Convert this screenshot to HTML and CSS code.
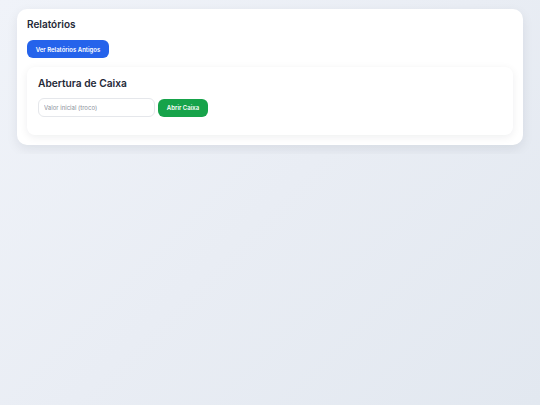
FILE: index.html
```html
<!DOCTYPE html>
<html lang="pt">
<head>
<meta charset="utf-8">
<link rel="stylesheet" href="styles.css">
</head>
<body>
<div class="page">
  <section class="card">
    <h1 class="title">Relatórios</h1>
    <button class="btn btn-blue">Ver Relatórios Antigos</button>
    <div class="inner">
      <h2 class="subtitle">Abertura de Caixa</h2>
      <div class="row">
        <input class="input" type="text" placeholder="Valor inicial (troco)">
        <button class="btn btn-green">Abrir Caixa</button>
      </div>
    </div>
  </section>
</div>
</body>
</html>
```

FILE: styles.css
```css
* { box-sizing: border-box; }
html {
  min-height: 100%;
  background-color: #e2e8f0;
  background-image: linear-gradient(135deg, #f0f3f9 0%, #e9edf4 50%, #e2e8f0 100%);
  background-attachment: fixed;
}
body {
  margin: 0;
  font-family: Inter, "Noto Sans", sans-serif;
  color: #1f2937;
}
.page { padding: 9px 17px; }
.card {
  background: #fff;
  border-radius: 10px;
  padding: 9px 10px 10px;
  box-shadow: 0 4px 12px rgba(15, 23, 42, 0.08);
}
.title {
  margin: 0;
  font-size: 10px;
  line-height: 12px;
  font-weight: 600;
  color: #1f2937;
}
.btn {
  border: none;
  font-family: inherit;
  font-weight: 600;
  font-size: 6px;
  color: #fff;
  border-radius: 6px;
  height: 18px;
  padding: 0;
}
.btn-blue {
  display: block;
  margin-top: 10px;
  background: #2563eb;
  width: 82px;
}
.inner {
  margin-top: 9px;
  background: #fff;
  border-radius: 8px;
  padding: 10px 11px 18px;
  box-shadow: 0 2px 8px rgba(15, 23, 42, 0.07);
}
.subtitle {
  margin: 0;
  font-size: 10.2px;
  line-height: 12px;
  font-weight: 600;
  color: #1f2937;
}
.row {
  margin-top: 9px;
  display: flex;
  gap: 3px;
  align-items: center;
}
.input {
  width: 117px;
  height: 19px;
  border: 1px solid #e5e7eb;
  border-radius: 6px;
  padding: 0 5px;
  font-family: inherit;
  font-size: 6px;
  color: #374151;
  background: #fff;
  outline: none;
}
.input::placeholder { color: #8b919b; }
.btn-green {
  background: #16a34a;
  width: 50px;
}
```
